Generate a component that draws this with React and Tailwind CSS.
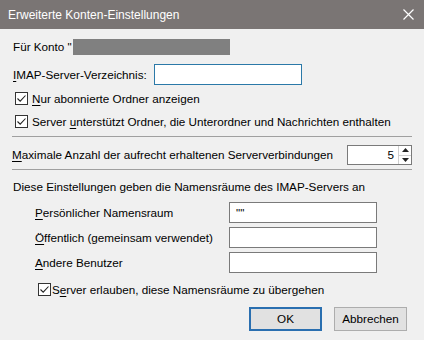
import React from 'react';

const Check = ({ className = '' }) => (
  <span className={`w-[13px] h-[13px] shrink-0 border border-[#333] bg-white flex items-center justify-center ${className}`}>
    <svg width="11" height="11" viewBox="0 0 11 11">
      <path d="M1.5 5.5 L4.2 8.2 L9.5 2.5" stroke="#222" strokeWidth="1.1" fill="none" />
    </svg>
  </span>
);

const Field = ({ value = '', focused = false, className = '' }) => (
  <div
    className={`h-[21px] shrink-0 bg-white border px-[6px] flex items-center ${
      focused ? 'border-[#2b79a8]' : 'border-[#7a7a7a]'
    } ${className}`}
  >
    {value}
  </div>
);

const K = ({ children }) => <u className="underline underline-offset-[2px]">{children}</u>;

export default function App() {
  return (
    <div className="w-[424px] h-[340px] bg-[#f0f0f0] text-[11.7px] leading-[16px] whitespace-nowrap text-black font-['Liberation_Sans',Arial,sans-serif] overflow-hidden">
      {/* Title bar */}
      <div className="h-[29px] bg-[#7a7574] flex items-center justify-between pl-[8px] pr-[10px] text-white">
        <span className="text-[12px]">Erweiterte Konten-Einstellungen</span>
        <svg width="11" height="11" viewBox="0 0 11 11">
          <path d="M0.5 0.5 L10.5 10.5 M10.5 0.5 L0.5 10.5" stroke="#fff" strokeWidth="1.2" />
        </svg>
      </div>

      <div className="px-[13px]">
        {/* Account */}
        <div className="mt-[9px] h-[17px] flex items-center">
          <span>Für Konto "</span>
          <span className="ml-[1px] w-[157px] h-[16px] bg-[#808080]" />
        </div>

        {/* IMAP dir */}
        <div className="mt-[9px] flex items-center h-[21px]">
          <span className="w-[141px]">
            <K>I</K>MAP-Server-Verzeichnis:
          </span>
          <Field focused className="w-[148px]" />
        </div>

        {/* Checkboxes */}
        <div className="mt-[2px] h-[23px] flex items-center pl-[2px] gap-[4px]">
          <Check />
          <span>
            <K>N</K>ur abonnierte Ordner anzeigen
          </span>
        </div>
        <div className="h-[23px] flex items-center pl-[2px] gap-[4px]">
          <Check />
          <span>
            Server <K>u</K>nterstützt Ordner, die Unterordner und Nachrichten enthalten
          </span>
        </div>
      </div>

      <div className="mx-[12px] mt-[3px] h-px bg-[#a0a0a0]" />

      <div className="px-[12px] mt-[8px] h-[20px] flex items-center justify-between">
        <span>
          <K>M</K>aximale Anzahl der aufrecht erhaltenen Serververbindungen
        </span>
        <div className="w-[65px] h-[20px] shrink-0 bg-white border border-[#7a7a7a] flex">
          <div className="flex-1 flex items-center justify-end pr-[4px]">5</div>
          <div className="w-[13px] flex flex-col border-l border-[#d0d0d0]">
            <div className="flex-1 flex items-center justify-center border-b border-[#d0d0d0]">
              <svg width="7" height="4" viewBox="0 0 7 4">
                <path d="M0 4 L3.5 0 L7 4 Z" fill="#222" />
              </svg>
            </div>
            <div className="flex-1 flex items-center justify-center">
              <svg width="7" height="4" viewBox="0 0 7 4">
                <path d="M0 0 L3.5 4 L7 0 Z" fill="#222" />
              </svg>
            </div>
          </div>
        </div>
      </div>

      <div className="mx-[12px] mt-[4px] h-px bg-[#a0a0a0]" />

      <div className="px-[13px]">
        <div className="mt-[8px] h-[18px] flex items-center">
          Diese Einstellungen geben die Namensräume des IMAP-Servers an
        </div>

        <div className="pl-[22px] mt-[6px] flex flex-col gap-[4px]">
          <div className="flex items-center">
            <span className="w-[194px]">
              <K>P</K>ersönlicher Namensraum
            </span>
            <Field value={'""'} className="w-[148px]" />
          </div>
          <div className="flex items-center">
            <span className="w-[194px]">
              <K>Ö</K>ffentlich (gemeinsam verwendet)
            </span>
            <Field className="w-[148px]" />
          </div>
          <div className="flex items-center">
            <span className="w-[194px]">
              <K>A</K>ndere Benutzer
            </span>
            <Field className="w-[148px]" />
          </div>
        </div>

        <div className="pl-[25px] mt-[7px] h-[19px] flex items-center gap-[1px]">
          <Check />
          <span>
            S<K>e</K>rver erlauben, diese Namensräume zu übergehen
          </span>
        </div>

        <div className="mt-[8px] flex justify-end gap-[12px] pr-[4px]">
          <button className="w-[73px] h-[24px] bg-[#e1e1e1] border-2 border-[#2a6fb0]">OK</button>
          <button className="w-[73px] h-[24px] bg-[#e1e1e1] border border-[#adadad]">Abbrechen</button>
        </div>
      </div>
    </div>
  );
}
